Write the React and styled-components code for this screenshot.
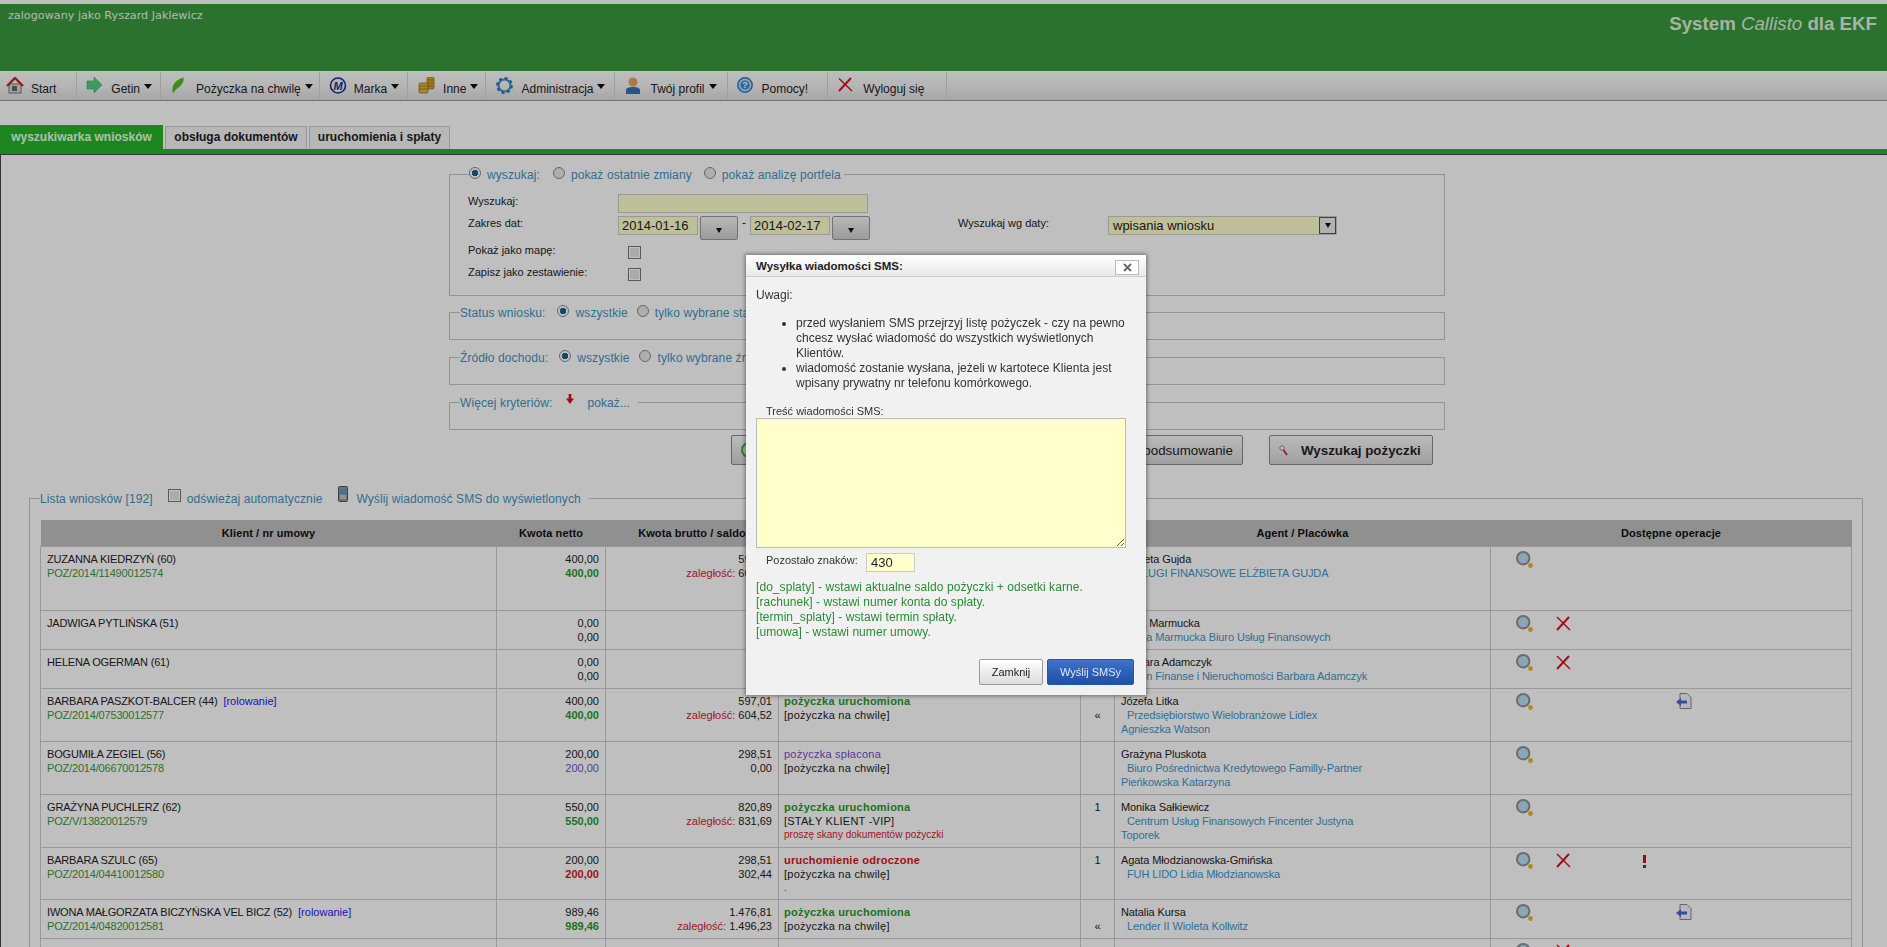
import React from "react";
import styled, { createGlobalStyle } from "styled-components";

const GlobalStyle = createGlobalStyle`
  html, body {
    margin: 0;
    padding: 0;
    height: 947px;
    overflow: hidden;
    background: #fff;
    font-family: "Liberation Sans", Arial, sans-serif;
    color: #222;
  }
`;

const Header = styled.div`
  margin-top: 4px;
  height: 67px;
  background: #38983d;
  display: flex;
  justify-content: space-between;
  align-items: flex-start;
  padding: 0 10px 0 8px;
`;

const LoggedAs = styled.div`
  margin-top: 6px;
  font-family: "DejaVu Sans", sans-serif;
  font-size: 11.2px;
  line-height: 12px;
  color: #e8f8e8;
`;

const SystemName = styled.div`
  margin-top: 9px;
  font-size: 18.7px;
  line-height: 22px;
  font-weight: bold;
  color: #dcf0dc;
  em {
    font-weight: normal;
  }
`;

const MenuBar = styled.div`
  display: flex;
  height: 28px;
  margin-top: 1px;
  background: linear-gradient(#fdfdfd, #f2f2f2 50%, #dedede);
  border-bottom: 1px solid #9c9c9c;
`;

const MenuItem = styled.div`
  display: flex;
  align-items: flex-start;
  box-sizing: border-box;
  padding-left: ${(props) => props.$left}px;
  padding-right: ${(props) => props.$right}px;
  border-right: 1px solid #d4d4d4;
  font-size: 12px;
`;

const MenuIcon = styled.span`
  width: 25px;
  height: 18px;
  margin-top: 5px;
  flex: none;
`;

const MenuText = styled.span`
  line-height: 14px;
  margin-top: 10px;
  white-space: nowrap;
`;

const Caret = styled.span`
  width: 0;
  height: 0;
  margin: 12px 0 0 4px;
  border-left: 4px solid transparent;
  border-right: 4px solid transparent;
  border-top: 5px solid #111;
`;

const Tabs = styled.div`
  display: flex;
  gap: 2px;
  margin-top: 24px;
  height: 24px;
  align-items: flex-end;
`;

const Tab = styled.div`
  box-sizing: border-box;
  width: ${(props) => props.$w}px;
  height: ${(props) => (props.$active ? 24 : 23)}px;
  line-height: ${(props) => (props.$active ? 22 : 21)}px;
  text-align: center;
  font-size: 12px;
  font-weight: bold;
  color: ${(props) => (props.$active ? "#e6ffe6" : "#222")};
  background: ${(props) => (props.$active ? "#28b328" : "#f4f4f4")};
  border: 1px solid ${(props) => (props.$active ? "#28b328" : "#ccc")};
  border-bottom: 0;
`;

const Panel = styled.div`
  border-top: 5px solid #28b328;
  box-shadow: inset 1px 1px 0 #444;
  padding-top: 13px;
`;

const SearchForm = styled.div`
  margin-left: 449px;
  width: 996px;
`;

const Group = styled.fieldset`
  margin: ${(props) => props.$top || 0}px 0 0;
  padding: 0;
  border: 1px solid #c4c4c4;
  min-width: 0;
`;

const GroupLegend = styled.legend`
  display: flex;
  align-items: center;
  box-sizing: border-box;
  height: 14px;
  padding: 2px ${(props) => props.$end || 3}px 0 0;
  margin-left: ${(props) => props.$margin || 10}px;
  font-size: 12px;
  line-height: 14px;
  letter-spacing: 0.1px;
  color: #3e94c0;
  white-space: nowrap;
`;

const Radio = styled.input.attrs({ type: "radio" })`
  appearance: none;
  box-sizing: border-box;
  width: 12px;
  height: 12px;
  flex: none;
  margin: -5px ${(props) => props.$after || 6}px 0 ${(props) => props.$before || 0}px;
  border-radius: 50%;
  border: 1px solid #888;
  background: #e8e8e8;
  &:checked {
    background: radial-gradient(circle, #1a628c 0 3px, #fff 3.5px);
  }
`;

const GroupBody = styled.div`
  height: ${(props) => props.$h || 20}px;
`;

const MainBody = styled.div`
  padding: 13px 0 14px 18px;
`;

const FormRow = styled.div`
  display: flex;
  align-items: flex-start;
  margin-top: ${(props) => props.$top || 0}px;
  height: ${(props) => props.$h}px;
`;

const FieldLabel = styled.label`
  width: ${(props) => props.$w || 150}px;
  flex: none;
  margin-top: ${(props) => props.$up || 0}px;
  font-size: 11px;
  line-height: 14px;
  color: #222;
`;

const YellowField = styled.div`
  box-sizing: border-box;
  width: ${(props) => props.$w}px;
  height: 19px;
  padding-left: ${(props) => props.$pad || 3}px;
  background: #ffc;
  border: 1px solid #ccc;
  font-size: 13px;
  line-height: 18px;
  color: #222;
  white-space: nowrap;
`;

const DateButton = styled.div`
  box-sizing: border-box;
  width: 38px;
  height: 24px;
  margin-left: 2px;
  display: flex;
  align-items: center;
  justify-content: center;
  padding-top: 4px;
  background: linear-gradient(#f6f6f6, #cfcfcf);
  border: 1px solid #999;
  border-radius: 2px;
`;

const SmallCaret = styled.span`
  width: 0;
  height: 0;
  border-left: 3px solid transparent;
  border-right: 3px solid transparent;
  border-top: 5px solid #111;
`;

const Dash = styled.span`
  width: 12px;
  text-align: center;
  font-size: 12px;
  line-height: 14px;
`;

const SelectBox = styled.div`
  box-sizing: border-box;
  display: flex;
  justify-content: space-between;
  width: 229px;
  height: 19px;
  padding-left: 4px;
  background: #ffc;
  border: 1px solid #ccc;
  font-size: 13px;
  line-height: 18px;
`;

const SelectArrow = styled.span`
  box-sizing: border-box;
  width: 17px;
  height: 17px;
  display: flex;
  align-items: center;
  justify-content: center;
  background: #ececec;
  border: 1px solid #555;
`;

const CheckBox = styled.input.attrs({ type: "checkbox" })`
  appearance: none;
  box-sizing: border-box;
  width: 13px;
  height: 13px;
  flex: none;
  margin: ${(props) => props.$margin || "0 0 0 10px"};
  background: #e4e4e4;
  border: 1px solid #777;
  box-shadow: inset 0 0 0 1px #fff;
`;

const ButtonRow = styled.div`
  display: flex;
  margin: 5px 0 0 282px;
  gap: 26px;
`;

const PageButton = styled.div`
  box-sizing: border-box;
  width: ${(props) => props.$w}px;
  height: 30px;
  display: flex;
  align-items: center;
  justify-content: ${(props) => props.$justify || "center"};
  gap: ${(props) => props.$gap || 8}px;
  padding: 0 9px;
  background: linear-gradient(#f8f8f8, #d6d6d6);
  border: 1px solid #888;
  border-radius: 2px;
  font-size: 13.33px;
  font-weight: ${(props) => (props.$main ? "bold" : "normal")};
  color: #222;
  white-space: nowrap;
`;

const ListGroup = styled.fieldset`
  margin: 26px 24px 0 29px;
  padding: 15px 10px 0 10px;
  border: 1px solid #c4c4c4;
  border-bottom: 0;
  min-width: 0;
`;

const ListLegend = styled(GroupLegend)`
  margin-left: 0;
  padding-right: 8px;
`;

const Table = styled.table`
  border-collapse: collapse;
  table-layout: fixed;
  width: 1811px;
  font-size: 11px;
  line-height: 14px;
`;

const HeadCell = styled.th`
  height: 26px;
  padding: 0;
  background: #c0c0c0;
  font-weight: bold;
  letter-spacing: 0.1px;
  color: #111;
`;

const Cell = styled.td`
  height: ${(props) => props.$h}px;
  box-sizing: border-box;
  padding: 5px 6px 0;
  vertical-align: top;
  border: 1px solid #ccc;
  text-align: ${(props) => props.$align || "left"};
  color: #222;
`;

const ClientCell = styled(Cell)`
  letter-spacing: -0.18px;
`;

const StatusCell = styled(Cell)`
  padding-left: 5px;
  letter-spacing: 0.24px;
`;

const AgentCell = styled(Cell)`
  letter-spacing: -0.1px;
`;

const Line = styled.div`
  white-space: nowrap;
  color: ${(props) => props.$color || "inherit"};
  font-weight: ${(props) => (props.$bold ? "bold" : "normal")};
  font-size: ${(props) => props.$size || 11}px;
`;

const StatusNote = styled(Line)`
  letter-spacing: 0;
`;

const Rolling = styled.span`
  margin-left: 6px;
  letter-spacing: 0;
  color: #2020ee;
`;

const Company = styled.div`
  width: 252px;
  text-indent: 6px;
  color: #3e96c8;
`;

const OpsCell = styled(Cell)`
  padding: 4px 0 0 25px;
`;

const Ops = styled.div`
  display: grid;
  grid-template-columns: repeat(5, 40px);
  height: 17px;
`;

const Overlay = styled.div`
  position: fixed;
  inset: 0;
  background: rgba(0, 0, 0, 0.25);
`;

const Modal = styled.div`
  position: fixed;
  left: 746px;
  top: 255px;
  width: 400px;
  height: 440px;
  background: #f1f1f1;
  box-shadow: 0 0 4px 1px rgba(40, 40, 40, 0.55);
`;

const ModalTitle = styled.div`
  position: relative;
  box-sizing: border-box;
  height: 22px;
  padding-left: 10px;
  background: linear-gradient(#fff, #e9e9e9);
  border-bottom: 1px solid #ccc;
  font-size: 11.5px;
  font-weight: bold;
  line-height: 22px;
  color: #222;
`;

const CloseButton = styled.div`
  position: absolute;
  right: 7px;
  top: 5px;
  box-sizing: border-box;
  width: 24px;
  height: 15px;
  background: #fff;
  border: 1px solid #bbb;
  display: flex;
  align-items: center;
  justify-content: center;
`;

const ModalBody = styled.div`
  padding: 11px 12px 0 10px;
  font-size: 12px;
  line-height: 15px;
  color: #333;
`;

const NoteList = styled.ul`
  margin: 13px 0 0;
  padding: 0 0 0 40px;
`;

const SmsLabel = styled.div`
  margin: 13px 0 0 10px;
  font-size: 11px;
  line-height: 14px;
`;

const SmsText = styled.textarea`
  display: block;
  box-sizing: border-box;
  width: 370px;
  height: 130px;
  margin: 0;
  padding: 2px;
  background: #ffc;
  border: 1px solid #bbb;
  outline: 0;
`;

const CounterRow = styled.div`
  display: flex;
  align-items: flex-start;
  margin-top: 5px;
  padding-left: 10px;
  height: 19px;
  font-size: 11px;
  line-height: 14px;
`;

const CounterLabel = styled.span`
  width: 100px;
`;

const Hints = styled.div`
  margin-top: 8px;
  letter-spacing: 0.06px;
  color: #2a8c34;
`;

const ModalButtons = styled.div`
  display: flex;
  justify-content: flex-end;
  gap: 4px;
  margin-top: 19px;
`;

const ModalButton = styled.div`
  box-sizing: border-box;
  width: ${(props) => props.$w}px;
  height: 26px;
  line-height: 25px;
  text-align: center;
  font-size: 11px;
  border-radius: 2px;
  border: 1px solid ${(props) => (props.$primary ? "#2a56a8" : "#999")};
  color: ${(props) => (props.$primary ? "#dfe8f8" : "#222")};
  background: ${(props) =>
    props.$primary
      ? "linear-gradient(#3f72cc, #1f4ea6)"
      : "linear-gradient(#fff, #dcdcdc)"};
`;

const HomeIcon = () => (
  <svg width="18" height="17" viewBox="0 0 18 17">
    <rect x="3" y="7" width="12" height="9" fill="#d9d9d9" stroke="#777" />
    <rect x="6" y="9" width="5" height="5" fill="#667" />
    <path d="M1 9 9 1l8 8" fill="none" stroke="#c22" strokeWidth="2.4" />
  </svg>
);

const ArrowIcon = () => (
  <svg width="17" height="16" viewBox="0 0 17 16">
    <path d="M1 4h7V0l8 8-8 8v-4H1z" fill="#4fd07e" stroke="#3aa860" strokeWidth=".6" />
  </svg>
);

const LeafIcon = () => (
  <svg width="13" height="17" viewBox="0 0 13 17">
    <path d="M2 16.5C0 10 3 3 12.5 .5c.5 3-.5 6-2.5 7.5-1 2-3 2.500-4.500 4-1.500 1-2 3-3.500 4.500z" fill="#4fbb22" />
  </svg>
);

const MarkIcon = () => (
  <svg width="18" height="17" viewBox="0 0 18 17">
    <circle cx="9" cy="8.5" r="7.5" fill="#eef" stroke="#1d2f8a" strokeWidth="1.6" />
    <text x="9" y="12.5" textAnchor="middle" fontSize="11" fontWeight="bold" fontStyle="italic" fontFamily="Liberation Sans" fill="#1d2f8a">M</text>
  </svg>
);

const CoinsIcon = () => (
  <svg width="17" height="17" viewBox="0 0 17 17">
    <rect x="9" y="0" width="7" height="12" rx="1.5" fill="#d8a92e" stroke="#8a6614" strokeWidth=".7" />
    <rect x="1" y="6" width="9" height="10" rx="1.5" fill="#e2b63c" stroke="#8a6614" strokeWidth=".7" />
    <path d="M1 9h9M1 12h9M9 3h7M10 6h6M10 9h6" stroke="#8a6614" strokeWidth=".7" />
  </svg>
);

const GearIcon = () => (
  <svg width="17" height="17" viewBox="0 0 17 17">
    <circle cx="8.5" cy="8.5" r="6" fill="none" stroke="#3f8fd0" strokeWidth="2.2" />
    <circle cx="8.5" cy="8.5" r="7.4" fill="none" stroke="#2a70b0" strokeWidth="2" strokeDasharray="3 2.8" />
  </svg>
);

const UserIcon = () => (
  <svg width="16" height="18" viewBox="0 0 16 18">
    <circle cx="8" cy="5" r="4.5" fill="#e8a258" />
    <path d="M1 17v-4c0-2 3-3 7-3s7 1 7 3v4z" fill="#2f72c0" />
  </svg>
);

const HelpIcon = () => (
  <svg width="16" height="16" viewBox="0 0 16 16">
    <circle cx="8" cy="8" r="7.2" fill="#bcdcf4" stroke="#2a78c4" strokeWidth="1.5" />
    <circle cx="8" cy="8" r="4.6" fill="#3d8ed6" />
    <text x="8" y="11" textAnchor="middle" fontSize="9" fontWeight="bold" fontFamily="Liberation Sans" fill="#fff">?</text>
  </svg>
);

const CrossIcon = () => (
  <svg width="15" height="15" viewBox="0 0 15 15">
    <path d="M1 1.5 14 14" stroke="#d3141c" strokeWidth="1.5" />
    <path d="M13 1 1 14" stroke="#d3141c" strokeWidth="1.9" />
  </svg>
);

const PhoneIcon = () => (
  <svg width="10" height="16" viewBox="0 0 10 16" style={{ margin: "-10px 8px 0 16px", flex: "none" }}>
    <rect x=".5" y=".5" width="9" height="15" rx="1" fill="#999" stroke="#555" />
    <rect x="2" y="3" width="6" height="5" fill="#4b9ee0" />
    <path d="M2 10h6M2 12h6" stroke="#eee" />
  </svg>
);

const DownArrow = () => (
  <svg width="8" height="10" viewBox="0 0 9 11" style={{ margin: "-9px 13px 0 14px", flex: "none" }}>
    <path d="M3 0h3v5h3l-4.5 6L0 5h3z" fill="#d41010" />
  </svg>
);

const SmallLens = () => (
  <svg width="9" height="11" viewBox="0 0 9 11">
    <circle cx="3" cy="3" r="2.2" fill="#fff" stroke="#888" />
    <path d="M4.5 5 8 10" stroke="#d41010" strokeWidth="1.6" />
  </svg>
);

const GreenDot = () => (
  <svg width="16" height="16" viewBox="0 0 16 16">
    <circle cx="8" cy="8" r="7" fill="#dff4df" stroke="#3da83d" strokeWidth="2" />
  </svg>
);

const LensIcon = () => (
  <svg width="17" height="17" viewBox="0 0 17 17">
    <circle cx="7.2" cy="7.2" r="6.2" fill="#b6e0f8" stroke="#909090" strokeWidth="2" />
    <circle cx="14.5" cy="14.5" r="2.4" fill="#f0b428" />
  </svg>
);

const RedCross = () => (
  <svg width="15" height="15" viewBox="0 0 15 15" style={{ marginTop: 1 }}>
    <path d="M1 1 14 14" stroke="#d3141c" strokeWidth="1.4" />
    <path d="M13 1 1 14" stroke="#d3141c" strokeWidth="2" />
  </svg>
);

const AlertIcon = () => (
  <svg width="5" height="13" viewBox="0 0 5 13" style={{ marginTop: 3, marginLeft: 6 }}>
    <path d="M1 0h3v8H1zM1 10h3v3H1z" fill="#c8101a" />
  </svg>
);

const DocIcon = () => (
  <svg width="16" height="16" viewBox="0 0 16 16">
    <path d="M4 .5h7l4 4v11H4z" fill="#f4f4f4" stroke="#888" />
    <path d="M0 9l5-4v2.5h6v3H5V13z" fill="#4468d4" />
  </svg>
);

const OPS = {
  lens: <LensIcon />,
  cross: <RedCross />,
  alert: <AlertIcon />,
  doc: <DocIcon />,
};

const menu = [
  { text: "Start", icon: <HomeIcon />, left: 6, right: 20 },
  { text: "Getin", icon: <ArrowIcon />, left: 9, right: 8, caret: true },
  { text: "Pożyczka na chwilę", icon: <LeafIcon />, left: 10, right: 6, caret: true },
  { text: "Marka", icon: <MarkIcon />, left: 9, right: 8, caret: true },
  { text: "Inne", icon: <CoinsIcon />, left: 10, right: 7, caret: true },
  { text: "Administracja", icon: <GearIcon />, left: 10, right: 9, caret: true },
  { text: "Twój profil", icon: <UserIcon />, left: 10, right: 10, caret: true },
  { text: "Pomocy!", icon: <HelpIcon />, left: 9, right: 19 },
  { text: "Wyloguj się", icon: <CrossIcon />, left: 10, right: 22 },
];

const GREEN = "#38983d";
const DUE = "#d62035";
const ACTIVE = "#279a27";

const rows = [
  {
    h: 64, name: "ZUZANNA KIEDRZYŃ (60)", nr: "POZ/2014/11490012574", net: "400,00", netColor: ACTIVE,
    gross: "597,01", due: "604,52", status: "pożyczka uruchomiona", statusColor: ACTIVE, kind: "[pożyczka na chwilę]",
    agent: "Elżbieta Gujda", company: "USŁUGI FINANSOWE ELŻBIETA GUJDA", ops: ["lens"],
  },
  {
    h: 39, name: "JADWIGA PYTLIŃSKA (51)", net: "0,00", gross: "0,00", saldo: "0,00",
    agent: "Anna Marmucka", company: "Anna Marmucka Biuro Usług Finansowych", ops: ["lens", "cross"],
  },
  {
    h: 39, name: "HELENA OGERMAN (61)", net: "0,00", gross: "0,00", saldo: "0,00",
    agent: "Barbara Adamczyk", company: "Eden Finanse i Nieruchomości Barbara Adamczyk", ops: ["lens", "cross"],
  },
  {
    h: 53, name: "BARBARA PASZKOT-BALCER (44)", rolling: true, nr: "POZ/2014/07530012577", net: "400,00", netColor: ACTIVE,
    gross: "597,01", due: "604,52", status: "pożyczka uruchomiona", statusColor: ACTIVE, kind: "[pożyczka na chwilę]", mark: "«",
    agent: "Józefa Litka", company: "Przedsiębiorstwo Wielobranżowe Lidlex Agnieszka\u00a0Watson", ops: ["lens", null, null, null, "doc"],
  },
  {
    h: 53, name: "BOGUMIŁA ZEGIEL (56)", nr: "POZ/2014/06670012578", net: "200,00", netColor: "#784dcd", netThin: true,
    gross: "298,51", saldo: "0,00", status: "pożyczka spłacona", statusColor: "#784dcd", statusThin: true, kind: "[pożyczka na chwilę]",
    agent: "Grażyna Pluskota", company: "Biuro Pośrednictwa Kredytowego Familly-Partner Pieńkowska Katarzyna", ops: ["lens"],
  },
  {
    h: 53, name: "GRAŻYNA PUCHLERZ (62)", nr: "POZ/V/13820012579", net: "550,00", netColor: ACTIVE,
    gross: "820,89", due: "831,69", status: "pożyczka uruchomiona", statusColor: ACTIVE, kind: "[STAŁY KLIENT -VIP]", note: "proszę skany dokumentów pożyczki", number: "1",
    agent: "Monika Sałkiewicz", company: "Centrum Usług Finansowych Fincenter Justyna Toporek", ops: ["lens"],
  },
  {
    h: 52, name: "BARBARA SZULC (65)", nr: "POZ/2014/04410012580", net: "200,00", netColor: "#d61515",
    gross: "298,51", saldo: "302,44", status: "uruchomienie odroczone", statusColor: "#d61515", kind: "[pożyczka na chwilę]", note: ".", number: "1",
    agent: "Agata Młodzianowska-Gmińska", company: "FUH LIDO Lidia Młodzianowska", ops: ["lens", "cross", null, "alert"],
  },
  {
    h: 39, name: "IWONA MAŁGORZATA BICZYŃSKA VEL BICZ (52)", rolling: true, nr: "POZ/2014/04820012581", net: "989,46", netColor: ACTIVE,
    gross: "1.476,81", due: "1.496,23", status: "pożyczka uruchomiona", statusColor: ACTIVE, kind: "[pożyczka na chwilę]", mark: "«",
    agent: "Natalia Kursa", company: "Lender II Wioleta Kollwitz", ops: ["lens", null, null, null, "doc"],
  },
  { h: 39, ops: ["lens", "cross"] },
];

const widths = [456, 109, 173, 302, 34, 376, 361];
const headers = ["Klient / nr umowy", "Kwota netto", "Kwota brutto / saldo", "", "", "Agent / Placówka", "Dostępne operacje"];

function LoanRow({ row }) {
  return (
    <tr>
      <ClientCell $h={row.h}>
        <Line>
          {row.name}
          {row.rolling && <Rolling>[rolowanie]</Rolling>}
        </Line>
        {row.nr && <Line $color={GREEN}>{row.nr}</Line>}
      </ClientCell>
      <Cell $h={row.h} $align="right">
        <Line>{row.net}</Line>
        <Line $color={row.netColor} $bold={row.netColor && !row.netThin}>{row.net}</Line>
      </Cell>
      <Cell $h={row.h} $align="right">
        <Line>{row.gross}</Line>
        {row.due && (
          <Line>
            <span style={{ color: DUE }}>zaległość:</span> {row.due}
          </Line>
        )}
        {row.saldo && <Line>{row.saldo}</Line>}
      </Cell>
      <StatusCell $h={row.h}>
        <Line $color={row.statusColor} $bold={!row.statusThin}>{row.status}</Line>
        <Line>{row.kind}</Line>
        {row.note && <StatusNote $color={DUE} $size={10}>{row.note}</StatusNote>}
      </StatusCell>
      <Cell $h={row.h} $align="center">
        {row.number && <Line>{row.number}</Line>}
        {row.mark && <Line style={{ marginTop: 14 }}>{row.mark}</Line>}
      </Cell>
      <AgentCell $h={row.h}>
        <Line>{row.agent}</Line>
        {row.company && <Company>{row.company}</Company>}
      </AgentCell>
      <OpsCell $h={row.h}>
        <Ops>
          {row.ops.map((op, i) => (
            <span key={i}>{op && OPS[op]}</span>
          ))}
        </Ops>
      </OpsCell>
    </tr>
  );
}

export default function App() {
  return (
    <>
      <GlobalStyle />
      <Header>
        <LoggedAs>zalogowany jako Ryszard Jaklewicz</LoggedAs>
        <SystemName>
          System <em>Callisto</em> dla EKF
        </SystemName>
      </Header>
      <MenuBar>
        {menu.map((item) => (
          <MenuItem key={item.text} $left={item.left} $right={item.right}>
            <MenuIcon>{item.icon}</MenuIcon>
            <MenuText>{item.text}</MenuText>
            {item.caret && <Caret />}
          </MenuItem>
        ))}
      </MenuBar>
      <Tabs>
        <Tab $active $w={163}>wyszukiwarka wniosków</Tab>
        <Tab $w={142}>obsługa dokumentów</Tab>
        <Tab $w={141}>uruchomienia i spłaty</Tab>
      </Tabs>
      <Panel>
        <SearchForm>
          <Group>
            <GroupLegend $margin={19}>
              <Radio name="mode" defaultChecked />
              wyszukaj:
              <Radio name="mode" $before={13} />
              pokaż ostatnie zmiany
              <Radio name="mode" $before={12} />
              pokaż analizę portfela
            </GroupLegend>
            <MainBody>
              <FormRow $h={19}>
                <FieldLabel>Wyszukaj:</FieldLabel>
                <YellowField $w={250} />
              </FormRow>
              <FormRow $h={24} $top={3}>
                <FieldLabel>Zakres dat:</FieldLabel>
                <YellowField $w={80}>2014-01-16</YellowField>
                <DateButton><SmallCaret /></DateButton>
                <Dash>-</Dash>
                <YellowField $w={80}>2014-02-17</YellowField>
                <DateButton><SmallCaret /></DateButton>
                <FieldLabel style={{ marginLeft: 88 }}>Wyszukaj wg daty:</FieldLabel>
                <SelectBox>
                  wpisania wniosku
                  <SelectArrow><SmallCaret /></SelectArrow>
                </SelectBox>
              </FormRow>
              <FormRow $h={13} $top={6}>
                <FieldLabel $up={-3}>Pokaż jako mapę:</FieldLabel>
                <CheckBox />
              </FormRow>
              <FormRow $h={13} $top={9}>
                <FieldLabel $up={-3}>Zapisz jako zestawienie:</FieldLabel>
                <CheckBox />
              </FormRow>
            </MainBody>
          </Group>
          <Group $top={9}>
            <GroupLegend>
              Status wniosku:
              <Radio name="status" defaultChecked $before={11} $after={7} />
              wszystkie
              <Radio name="status" $before={9} />
              tylko wybrane statusy
            </GroupLegend>
            <GroupBody />
          </Group>
          <Group $top={10}>
            <GroupLegend>
              Źródło dochodu:
              <Radio name="income" defaultChecked $before={11} />
              wszystkie
              <Radio name="income" $before={10} />
              tylko wybrane źródła
            </GroupLegend>
            <GroupBody />
          </Group>
          <Group $top={10}>
            <GroupLegend $end={8}>
              Więcej kryteriów:
              <DownArrow />
              pokaż...
            </GroupLegend>
            <GroupBody />
          </Group>
          <ButtonRow>
            <PageButton $w={186} $justify="flex-start">
              <GreenDot />
              Pokaż na mapie
            </PageButton>
            <PageButton $w={300} $justify="flex-end">Wyszukaj i pokaż podsumowanie</PageButton>
            <PageButton $w={164} $main $gap={13} $justify="flex-start">
              <SmallLens />
              Wyszukaj pożyczki
            </PageButton>
          </ButtonRow>
        </SearchForm>
        <ListGroup>
          <ListLegend>
            Lista wniosków [192]
            <CheckBox $margin="-7px 6px 0 15px" />
            odświeżaj automatycznie
            <PhoneIcon />
            Wyślij wiadomość SMS do wyświetlonych
          </ListLegend>
          <Table>
            <colgroup>
              {widths.map((w, i) => (
                <col key={i} style={{ width: w }} />
              ))}
            </colgroup>
            <thead>
              <tr>
                {headers.map((title, i) => (
                  <HeadCell key={i}>{title}</HeadCell>
                ))}
              </tr>
            </thead>
            <tbody>
              {rows.map((row, i) => (
                <LoanRow key={i} row={row} />
              ))}
            </tbody>
          </Table>
        </ListGroup>
      </Panel>
      <Overlay />
      <Modal>
        <ModalTitle>
          Wysyłka wiadomości SMS:
          <CloseButton>
            <svg width="9" height="9" viewBox="0 0 9 9">
              <path d="M1 1l7 7M8 1 1 8" stroke="#666" strokeWidth="1.8" />
            </svg>
          </CloseButton>
        </ModalTitle>
        <ModalBody>
          Uwagi:
          <NoteList>
            <li>przed wysłaniem SMS przejrzyj listę pożyczek - czy na pewno chcesz wysłać wiadomość do wszystkich wyświetlonych Klientów.</li>
            <li>wiadomość zostanie wysłana, jeżeli w kartotece Klienta jest wpisany prywatny nr telefonu komórkowego.</li>
          </NoteList>
          <SmsLabel>Treść wiadomości SMS:</SmsLabel>
          <SmsText />
          <CounterRow>
            <CounterLabel>Pozostało znaków:</CounterLabel>
            <YellowField $w={49} $pad={4}>430</YellowField>
          </CounterRow>
          <Hints>
            [do_splaty] - wstawi aktualne saldo pożyczki + odsetki karne.<br />
            [rachunek] - wstawi numer konta do spłaty.<br />
            [termin_splaty] - wstawi termin spłaty.<br />
            [umowa] - wstawi numer umowy.
          </Hints>
          <ModalButtons>
            <ModalButton $w={64}>Zamknij</ModalButton>
            <ModalButton $w={87} $primary>Wyślij SMSy</ModalButton>
          </ModalButtons>
        </ModalBody>
      </Modal>
    </>
  );
}
